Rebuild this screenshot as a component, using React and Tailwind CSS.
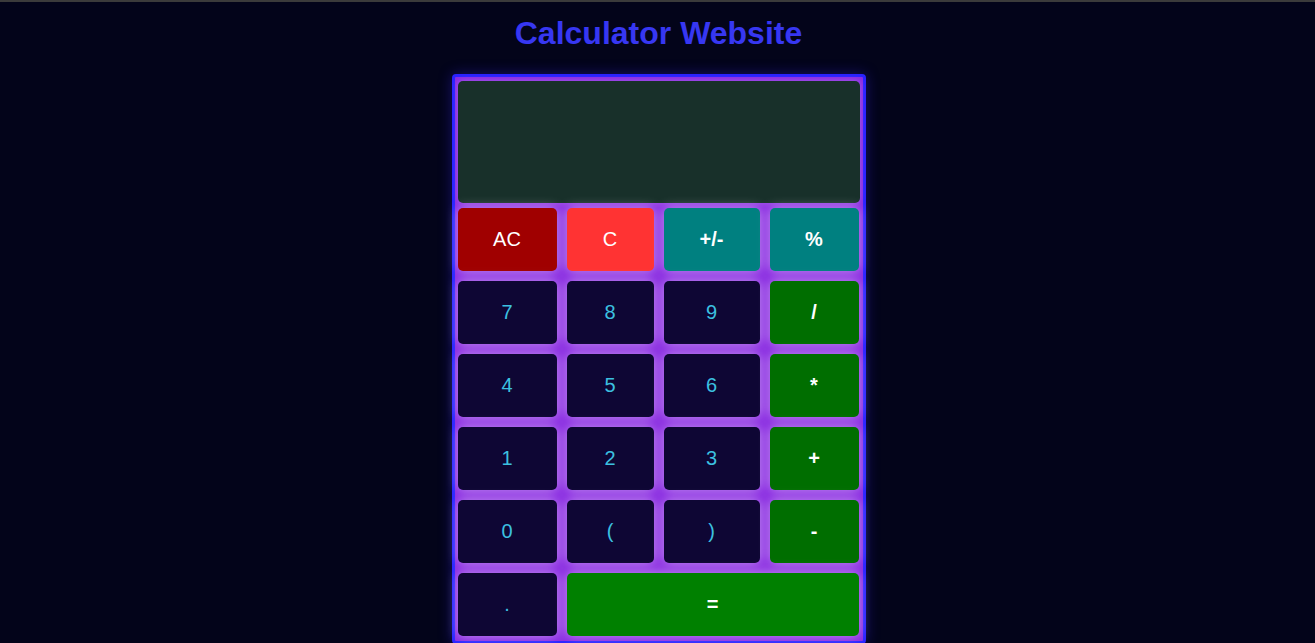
import React from 'react';

const keys = [
  { label: 'AC', cls: 'bg-[#a00000] text-white' },
  { label: 'C', cls: 'bg-[#ff3333] text-white' },
  { label: '+/-', cls: 'bg-[#008080] text-white font-bold' },
  { label: '%', cls: 'bg-[#008080] text-white font-bold' },
  { label: '7', cls: 'bg-[#0e0634] text-[#3cc0e0]' },
  { label: '8', cls: 'bg-[#0e0634] text-[#3cc0e0]' },
  { label: '9', cls: 'bg-[#0e0634] text-[#3cc0e0]' },
  { label: '/', cls: 'bg-[#006e00] text-white font-bold' },
  { label: '4', cls: 'bg-[#0e0634] text-[#3cc0e0]' },
  { label: '5', cls: 'bg-[#0e0634] text-[#3cc0e0]' },
  { label: '6', cls: 'bg-[#0e0634] text-[#3cc0e0]' },
  { label: '*', cls: 'bg-[#006e00] text-white font-bold' },
  { label: '1', cls: 'bg-[#0e0634] text-[#3cc0e0]' },
  { label: '2', cls: 'bg-[#0e0634] text-[#3cc0e0]' },
  { label: '3', cls: 'bg-[#0e0634] text-[#3cc0e0]' },
  { label: '+', cls: 'bg-[#006e00] text-white font-bold' },
  { label: '0', cls: 'bg-[#0e0634] text-[#3cc0e0]' },
  { label: '(', cls: 'bg-[#0e0634] text-[#3cc0e0]' },
  { label: ')', cls: 'bg-[#0e0634] text-[#3cc0e0]' },
  { label: '-', cls: 'bg-[#006e00] text-white font-bold' },
  { label: '.', cls: 'bg-[#0e0634] text-[#3cc0e0]' },
  { label: '=', cls: 'bg-[#008000] text-white font-bold col-span-3' },
];

const App = () => {
  return (
    <div className="min-h-screen bg-[#03041a] font-['Liberation_Sans',Arial,sans-serif]">
      <div className="h-[2px] bg-[#3b3b3b]" />
      <h1 className="pt-[13px] pl-[2px] text-center text-[32px] leading-[37px] font-bold text-[#3737f2]">
        Calculator Website
      </h1>

      <div className="flex justify-center pl-[2px]">
        <div className="mt-[22px] w-[414px] rounded-[4px] border-[3px] border-[#2a22ff] bg-[#8a2be2] px-[3px] pt-[4px] pb-[5px] shadow-[0_0_14px_rgba(60,40,255,0.35)]">
          {/* Display */}
          <div className="h-[122px] rounded-[5px] bg-[#18302a] shadow-[0_0_6px_rgba(255,255,255,0.25)]" />

          {/* Keys */}
          <div className="mt-[5px] grid grid-cols-[99px_87px_96px_89px] gap-[10px]">
            {keys.map((k) => (
              <button
                key={k.label}
                className={`h-[63px] rounded-[5px] pb-[2px] text-[20px] shadow-[0_0_12px_rgba(255,255,255,0.5)] ${k.cls}`}
              >
                {k.label}
              </button>
            ))}
          </div>
        </div>
      </div>
    </div>
  );
};

export default App;
